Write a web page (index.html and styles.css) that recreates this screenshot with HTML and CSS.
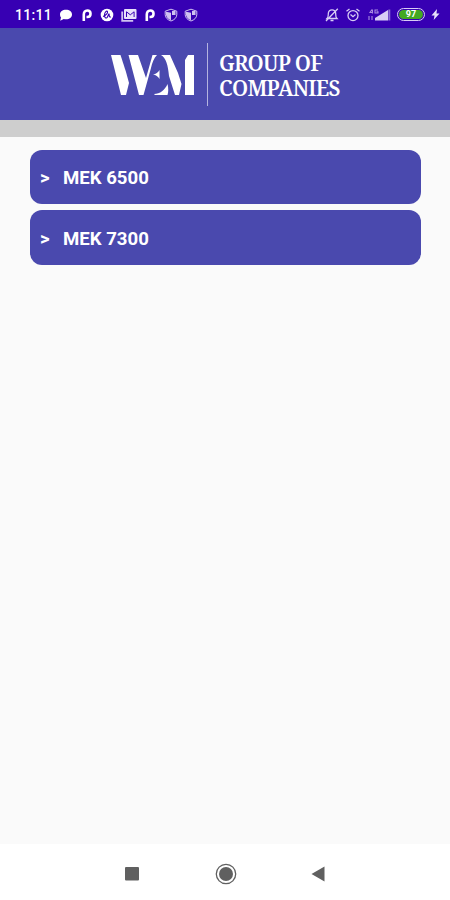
FILE: index.html
```html
<!DOCTYPE html>
<html lang="en">
<head>
  <meta charset="UTF-8" />
  <title>WEM Group of Companies</title>
  <meta name="viewport" content="width=device-width, initial-scale=1.0" />
  <link rel="stylesheet" href="styles.css">
</head>
<body>

  <!-- Status bar -->
  <div class="status-bar">
    <span class="time">11:11</span>
    <div class="notifications">
      <svg width="14" height="14" viewBox="0 0 14 14"><path d="M7 1.8c3.500 0 6 2 6 4.700s-2.500 4.800-6 4.800c-.8 0-1.500-.1-2.200-.3L1.200 12.800l.8-3.300C1.300 8.700 1 7.700 1 6.500c0-2.700 2.500-4.700 6-4.700z" fill="#fff"/></svg>
      <svg width="14" height="14" viewBox="0 0 14 14"><path d="M3.800 13V6.500C3.800 4 5 2.500 7.300 2.500c4.300 0 4.300 6.500 0 6.500H6.500" fill="none" stroke="#fff" stroke-width="2.600"/></svg>
      <svg width="14" height="14" viewBox="0 0 14 14"><circle cx="7" cy="7" r="6.300" fill="#fff"/><path d="M3 8.500C6 7.500 8 5 7.500 3.600S4.500 4 4.500 7s1.500 3.500 2.500 2.600S8.500 5.500 9 6s-.5 3.500 2 3" fill="none" stroke="#3700b3" stroke-width="1.100"/></svg>
      <svg width="16" height="14" viewBox="0 0 16 14"><path d="M1.200 3.500v9.300h11" fill="none" stroke="#cfc2f0" stroke-width="1.800"/><rect x="3" y="1" width="12.500" height="10" rx="1" fill="#e8e1fa"/><path d="M5.500 9V3.800l3.800 3 3.800-3V9" fill="none" stroke="#3700b3"/></svg>
      <svg width="14" height="14" viewBox="0 0 14 14"><path d="M3.800 13V6.500C3.800 4 5 2.500 7.300 2.500c4.300 0 4.300 6.500 0 6.500H6.500" fill="none" stroke="#fff" stroke-width="2.600"/></svg>
      <svg width="14" height="14" viewBox="0 0 14 14"><path d="M7 1.200l5.800 2v3.500c0 3-2.500 5.200-5.800 6.300-3.300-1.100-5.800-3.300-5.800-6.300V3.200z" fill="none" stroke="#cfc2f0"/><path d="M2 3.700l5 1v7.500C4 11 2.500 9 2 7zM8 3h3.500v4H8z" fill="#cfc2f0"/></svg>
      <svg width="14" height="14" viewBox="0 0 14 14"><path d="M7 1.200l5.800 2v3.500c0 3-2.500 5.200-5.800 6.300-3.300-1.100-5.800-3.300-5.800-6.300V3.200z" fill="none" stroke="#cfc2f0"/><path d="M2 3.700l5 1v7.500C4 11 2.500 9 2 7zM8 3h3.500v4H8z" fill="#cfc2f0"/></svg>
    </div>
    <div class="system">
      <svg width="14" height="14" viewBox="0 0 14 14" fill="none" stroke="#d8cdf5" stroke-width="1.300"><path d="M2 10.500h10c-1.500-1.500-1.300-3-1.300-5C10.700 3 9 1.800 7 1.800S3.300 3 3.300 5.500c0 2 .2 3.500-1.300 5zM5.500 12.500h3M12.800.8L1 13"/></svg>
      <svg width="16" height="14" viewBox="0 0 16 14" fill="none" stroke="#d8cdf5" stroke-width="1.300"><circle cx="8" cy="7.600" r="5"/><path d="M1.500 3.300L4.500 1M14.500 3.300L11.500 1M5.500 6.500L8 8.700l2.500-2.200"/></svg>
      <svg class="signal" width="24" height="14" viewBox="0 0 24 14"><path d="M5 1.500L3 4.500h3M5.500 1.500v4M11 2H8v3h3V3.700H9.500M2 8v4M5 8v4" fill="none" stroke="#a88be0" stroke-width="1.100"/><path d="M8 12.500V10l13-8v10.500z" fill="#d8cdf5"/><path d="M21.300 12.500v-11h2v11z" fill="#8a6bd4"/></svg>
      <span class="battery"><span>97</span></span>
      <svg width="9" height="13" viewBox="0 0 9 13"><path d="M6 1L.5 7.500h3L2.700 12l5.800-6.500h-3z" fill="#e8e1fa"/></svg>
    </div>
  </div>

  <!-- Header -->
  <header>
    <svg class="logo" width="84" height="42" viewBox="0 0 84 42" role="img" aria-label="WEM">
      <path d="M0 1h9.500l5.500 17 3 11-3 12h-5z" fill="#fff"/>
      <path d="M17.500 1h9.500l8 23L41.500 1H46c-3 3-5 8-6 13l-7.500 27H28z" fill="#fff"/>
      <path d="M50 1h9l8 18 3.500 11-2.500 11h-4L58 22C57 11 55 4 50 1z" fill="#fff"/>
      <path d="M42 20.500c3-.5 5-2 6.500-4.500v9c-1.500-2.500-3.500-4-6.500-4.500z" fill="#fff"/>
      <path d="M43 40c6 0 11-4 13.500-10 1 4 1 8 0 11H44z" fill="#fff"/>
      <path d="M83 1v40h-9V6l3-5z" fill="#fff"/>
    </svg>
    <div class="company">
      <span>GROUP OF</span>
      <span>COMPANIES</span>
    </div>
  </header>
  <div class="divider"></div>

  <!-- Model list -->
  <main>
    <button class="model"><span class="arrow">&gt;</span>MEK 6500</button>
    <button class="model"><span class="arrow">&gt;</span>MEK 7300</button>
  </main>

  <!-- Navigation -->
  <nav>
    <svg width="24" height="24" viewBox="0 0 24 24"><rect x="5" y="5" width="14" height="13.500" rx="1" fill="#606060"/></svg>
    <svg width="24" height="24" viewBox="0 0 24 24"><circle cx="12" cy="12" r="9.700" fill="none" stroke="#606060" stroke-width="1.300"/><circle cx="12" cy="12" r="7" fill="#606060"/></svg>
    <svg width="24" height="24" viewBox="0 0 24 24"><path d="M17.500 4.500v15L4.500 12z" fill="#606060"/></svg>
  </nav>

</body>
</html>
```

FILE: styles.css
```css
* {
  margin: 0;
  padding: 0;
  box-sizing: border-box;
  font-family: Roboto, sans-serif;
}

body {
  height: 100vh;
  display: flex;
  flex-direction: column;
  background: #fafafa;
  color: white;
}

svg {
  display: block;
  flex-shrink: 0;
}

.status-bar {
  height: 28px;
  background: #3700b3;
  display: flex;
  align-items: center;
  padding: 1px 10px 0 15px;
}

.time {
  width: 44px;
  font-size: 14px;
  font-weight: 500;
  letter-spacing: 0.3px;
}

.notifications {
  display: flex;
  gap: 6.5px;
}

.system {
  display: flex;
  align-items: center;
  gap: 6px;
  margin-left: auto;
}

.battery {
  width: 28px;
  height: 13px;
  padding: 1px;
  border: 1px solid #d8cdf5;
  border-radius: 7px;
}

.battery span {
  display: block;
  height: 9px;
  border-radius: 5px;
  background: #43a821;
  font-size: 9px;
  font-weight: bold;
  line-height: 9px;
  text-align: center;
}

header {
  height: 92px;
  background: #4a49ae;
  display: flex;
  align-items: center;
  padding: 1px 0 0 111px;
}

.company {
  height: 63px;
  margin-left: 12px;
  padding: 8px 0 0 11px;
  border-left: 1px solid #b5b4e0;
  font-size: 21px;
  font-weight: 600;
  letter-spacing: -0.7px;
  line-height: 25px;
}

.company span {
  display: block;
  font-family: "Noto Serif", "Liberation Serif", serif;
}

.divider {
  height: 17px;
  background: #cecece;
}

main {
  flex: 1;
  display: flex;
  flex-direction: column;
  gap: 6px;
  padding: 12.5px 29px 0 30px;
}

.model {
  height: 54.7px;
  display: flex;
  align-items: center;
  padding: 3px 10px 0;
  border: none;
  border-radius: 12px;
  background: #4a49ae;
  color: white;
  font-size: 18.6px;
  font-weight: bold;
  cursor: pointer;
}

.arrow {
  width: 23px;
  text-align: left;
}

nav {
  height: 56px;
  background: white;
  display: flex;
  align-items: center;
  justify-content: space-between;
  padding: 3px 119px 0 120px;
}
```
